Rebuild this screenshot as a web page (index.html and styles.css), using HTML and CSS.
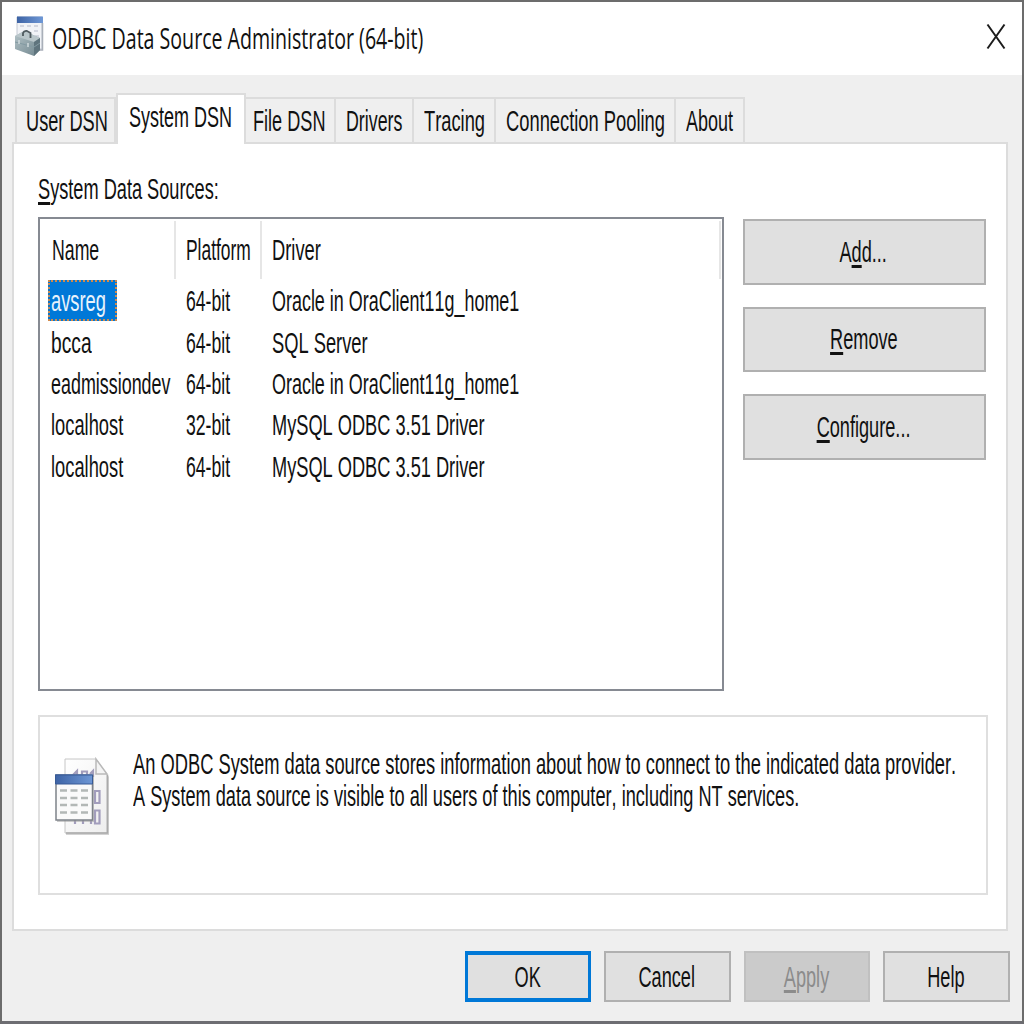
FILE: index.html
```html
<!DOCTYPE html>
<html lang="en">
<head>
<meta charset="utf-8">
<title>ODBC Data Source Administrator (64-bit)</title>
<link rel="stylesheet" href="styles.css">
</head>
<body>
<div class="window">
  <header class="titlebar">
    <svg class="app-icon" width="29" height="41" viewBox="0 0 29 41">
      <defs>
        <linearGradient id="bar" x1="0" x2="1"><stop offset="0" stop-color="#3d63a5"/><stop offset="1" stop-color="#6f98d6"/></linearGradient>
        <linearGradient id="box" x1="0" y1="0" x2="1" y2="1"><stop offset="0" stop-color="#b5c4c8"/><stop offset="1" stop-color="#6f858d"/></linearGradient>
      </defs>
      <path d="M2 1H27V33H2Z" fill="#f1f3f7" stroke="#c3c8d2"/>
      <path d="M27.500 7V34H20" fill="none" stroke="#a9afb9" stroke-width="1.500"/>
      <path d="M2 .5H28V7H2Z" fill="url(#bar)"/>
      <path d="M5 10H9M12 10H16M19 10H23M19 15H23M20 20H24" stroke="#d3d6e0" stroke-width="2"/>
      <path d="M0 20L9 15L25 22V34L19 40L0 33Z" fill="url(#box)"/>
      <path d="M0 20L9 15L25 22L19 26Z" fill="#b9c6ca"/>
      <path d="M19 26L25 22V34L19 40Z" fill="#5f747d"/>
      <path d="M0 26L19 31L25 27" fill="none" stroke="#839aa2"/>
      <path d="M8 20V17Q9 14.500 12 15L15.500 17V22" fill="none" stroke="#4f5a5f" stroke-width="1.800"/>
      <path d="M4 24V28M13 27V31" stroke="#cfdadd" stroke-width="1.500"/>
    </svg>
    <h1 class="title"><span class="txt">ODBC Data Source Administrator (64-bit)</span></h1>
    <svg class="close" width="20" height="27" viewBox="0 0 20 27"><path d="M1.500 1.500L18.500 25.500M18.500 1.500L1.500 25.500" fill="none" stroke="#1c1c1c" stroke-width="2"/></svg>
  </header>

  <nav class="tabs">
    <div class="tab tab-user"><span class="txt">User DSN</span></div>
    <div class="tab tab-system active"><span class="txt">System DSN</span></div>
    <div class="tab tab-file"><span class="txt">File DSN</span></div>
    <div class="tab tab-drivers"><span class="txt">Drivers</span></div>
    <div class="tab tab-tracing"><span class="txt">Tracing</span></div>
    <div class="tab tab-pooling"><span class="txt">Connection Pooling</span></div>
    <div class="tab tab-about"><span class="txt">About</span></div>
  </nav>

  <main class="panel">
    <div class="label"><span class="txt"><u>S</u>ystem Data Sources:</span></div>
    <div class="content">
      <div class="list">
        <div class="row head">
          <div class="c1"><span class="txt">Name</span></div><div class="c2"><span class="txt">Platform</span></div><div class="c3"><span class="txt">Driver</span></div>
        </div>
        <div class="row">
          <div class="c1"><div class="selected"><span class="txt">avsreg</span></div></div><div class="c2"><span class="txt">64-bit</span></div><div class="c3"><span class="txt oracle">Oracle in OraClient11g_home1</span></div>
        </div>
        <div class="row">
          <div class="c1"><span class="txt short">bcca</span></div><div class="c2"><span class="txt">64-bit</span></div><div class="c3"><span class="txt">SQL Server</span></div>
        </div>
        <div class="row">
          <div class="c1"><span class="txt long">eadmissiondev</span></div><div class="c2"><span class="txt">64-bit</span></div><div class="c3"><span class="txt oracle">Oracle in OraClient11g_home1</span></div>
        </div>
        <div class="row">
          <div class="c1"><span class="txt">localhost</span></div><div class="c2"><span class="txt">32-bit</span></div><div class="c3"><span class="txt mysql">MySQL ODBC 3.51 Driver</span></div>
        </div>
        <div class="row">
          <div class="c1"><span class="txt">localhost</span></div><div class="c2"><span class="txt">64-bit</span></div><div class="c3"><span class="txt mysql">MySQL ODBC 3.51 Driver</span></div>
        </div>
      </div>
      <div class="actions">
        <button class="btn"><span class="txt">A<u>d</u>d...</span></button>
        <button class="btn"><span class="txt"><u>R</u>emove</span></button>
        <button class="btn"><span class="txt"><u>C</u>onfigure...</span></button>
      </div>
    </div>
    <section class="info">
      <svg class="info-icon" width="56" height="80" viewBox="0 0 56 80">
        <defs><linearGradient id="page" x1="0" x2="1" y1="0" y2="1"><stop offset="0" stop-color="#fff"/><stop offset="1" stop-color="#eee"/></linearGradient></defs>
        <path d="M11 4H43L54 20V78H11Z" fill="#b5b5b5" opacity=".6"/>
        <path d="M10 2H41L52 18V76H10Z" fill="url(#page)" stroke="#c6c6c6"/>
        <path d="M52.500 18V76H11" fill="none" stroke="#aaa" stroke-width="1.500"/>
        <path d="M41 2V17H52Z" fill="#f4f4f4" stroke="#b9b9b9" stroke-width="1.500"/>
        <path d="M18 18L22 14V20M27 20V14.500H32V20M35 17L38 14V20M20 61V67M28 61V67M36 60V67" fill="none" stroke="#a29dbc" stroke-width="2.200"/>
        <path d="M40 34H44.500V46H40ZM40 53.500H44.500V66.500H40Z" fill="none" stroke="#a29dbc" stroke-width="2.200"/>
        <path d="M2 18H39V65H2Z" fill="#999" opacity=".5"/>
        <path d="M1 18H37.500V63H1Z" fill="#fafafa" stroke="#7e8289" stroke-width="1.500"/>
        <path d="M0 17.500H38V27H0Z" fill="url(#bar)"/>
        <path d="M.5 18H37.500V27H.5Z" fill="none" stroke="#385b96"/>
        <path d="M5 33.500H12M15.500 33.500H22.500M26 33.500H33M5 41H12M15.500 41H22.500M26 41H33M5 48H12M15.500 48H22.500M26 48H33M5 55.500H12M15.500 55.500H22.500M26 55.500H33" stroke="#b3b8b6" stroke-width="2.500"/>
      </svg>
      <p class="desc"><span class="txt line1">An ODBC System data source stores information about how to connect to the indicated data provider.</span><span class="txt line2">A System data source is visible to all users of this computer, including NT services.</span></p>
    </section>
  </main>

  <footer class="footer">
    <button class="btn ok"><span class="txt">OK</span></button>
    <button class="btn"><span class="txt">Cancel</span></button>
    <button class="btn disabled" disabled><span class="txt"><u>A</u>pply</span></button>
    <button class="btn"><span class="txt">Help</span></button>
  </footer>
</div>
</body>
</html>
```
FILE: styles.css
```css
* { box-sizing: border-box; }
body { margin: 0; background: #efefef; }

.window {
  width: 1024px;
  height: 1024px;
  display: flex;
  flex-direction: column;
  overflow: hidden;
  background: #efefef;
  border: 2px solid #6c6c6c;
  border-bottom: 3px solid #6d6d72;
  color: #111;
  font: 30px/34px "Liberation Sans", Arial, sans-serif;
  font-kerning: none;
}

/* The dialog typeface is tall and narrow. */
.txt {
  display: inline-block;
  white-space: nowrap;
  transform: scaleX(var(--s, .61));
  transform-origin: 0 0;
}
u {
  text-decoration: underline;
  text-decoration-thickness: 2.5px;
  text-underline-offset: 2.5px;
  text-decoration-skip-ink: none;
}

.titlebar {
  height: 73px;
  flex: none;
  display: flex;
  align-items: flex-start;
  background: #fff;
}
.app-icon { margin: 14px 0 0 13px; flex: none; }
.title {
  --s: .653;
  width: 920px;
  margin: 15px 0 0 8px;
  font: 30px/41px "Open Sans", "Noto Sans", sans-serif;
}
.close { margin: 21px 0 0 14px; flex: none; }

.tabs {
  height: 67px;
  flex: none;
  display: flex;
  align-items: flex-end;
  padding-left: 13px;
  position: relative;
  z-index: 1;
}
.tab {
  height: 45px;
  border: 2px solid #dcdcdc;
  border-left: 0;
  border-bottom: 0;
  padding-top: 5px;
}
.tab-user { width: 101px; border-left: 2px solid #dcdcdc; padding-left: 9px; --s: .606; }
.tab-system { width: 130px; padding-left: 11px; --s: .6; }
.tab-file { width: 90px; padding-left: 7px; --s: .604; }
.tab-drivers { width: 78px; padding-left: 10px; --s: .594; }
.tab-tracing { width: 82px; padding-left: 10px; --s: .61; }
.tab-pooling { width: 180px; padding-left: 10px; --s: .611; }
.tab-about { width: 69px; padding-left: 10px; --s: .6; }
.tab.active {
  height: 51px;
  margin-bottom: -2px;
  border-left: 2px solid #dcdcdc;
  background: #fff;
}

.panel {
  width: 996px;
  height: 789px;
  flex: none;
  margin-left: 10px;
  padding: 28px 0 0 24px;
  background: #fff;
  border: 2px solid #dcdcdc;
}
.label { height: 45px; --s: .606; }
.content { display: flex; gap: 19px; }
.list {
  width: 686px;
  height: 474px;
  padding-top: 2px;
  border: 2px solid #868a92;
}
.row {
  display: flex;
  height: 41.3px;
  line-height: 41px;
}
.head {
  height: 58px;
  margin-bottom: 1.4px;
  line-height: 57px;
}
.c1 { width: 135px; padding-left: 11px; }
.c2 { width: 87px; padding-left: 11px; --s: .588; }
.c3 { width: 459px; padding-left: 10px; }
.head > div { border-right: 2px solid #e6e6e6; }
.head .c1 { width: 136px; padding-left: 12px; --s: .59; }
.head .c2 { width: 86px; padding-left: 10px; --s: .58; }
.selected {
  width: 69px;
  height: 41px;
  margin-left: -3px;
  padding-left: 1px;
  line-height: 37px;
  border: 2px dotted #d28a4b;
  background: #0078d7;
  color: #e8f3fc;
}
.short { --s: .64; }
.long { --s: .597; }
.oracle { --s: .598; }
.mysql { --s: .607; }

.actions {
  display: flex;
  flex-direction: column;
  gap: 22px;
  padding-top: 2px;
}
.btn {
  width: 243px;
  height: 65.6px;
  display: flex;
  align-items: center;
  justify-content: center;
  padding: 0 2px 0 0;
  border: 2px solid #b0b0b0;
  background: #e0e0e0;
  color: #111;
  font: inherit;
}
.btn .txt { transform-origin: 50% 0; --s: .605; }

.info {
  width: 950px;
  height: 180px;
  margin-top: 24px;
  display: flex;
  border: 2px solid #dfdfdf;
}
.info-icon { margin: 40px 0 0 15px; flex: none; }
.desc {
  margin: 31px 0 0 22px;
  width: 840px;
  line-height: 32px;
}
.desc .txt { display: block; width: max-content; }
.line1 { --s: .6102; }
.line2 { --s: .6055; }

.footer {
  display: flex;
  justify-content: flex-end;
  gap: 13px;
  padding: 20px 12px 0 0;
}
.footer .btn { width: 126.6px; height: 51px; }
.footer .ok { border: solid #0078d7; border-width: 4px 3px; padding: 0; }
.footer .disabled { background: #cbcbcb; border-color: #c0c0c0; color: #8c8c8c; }
```
